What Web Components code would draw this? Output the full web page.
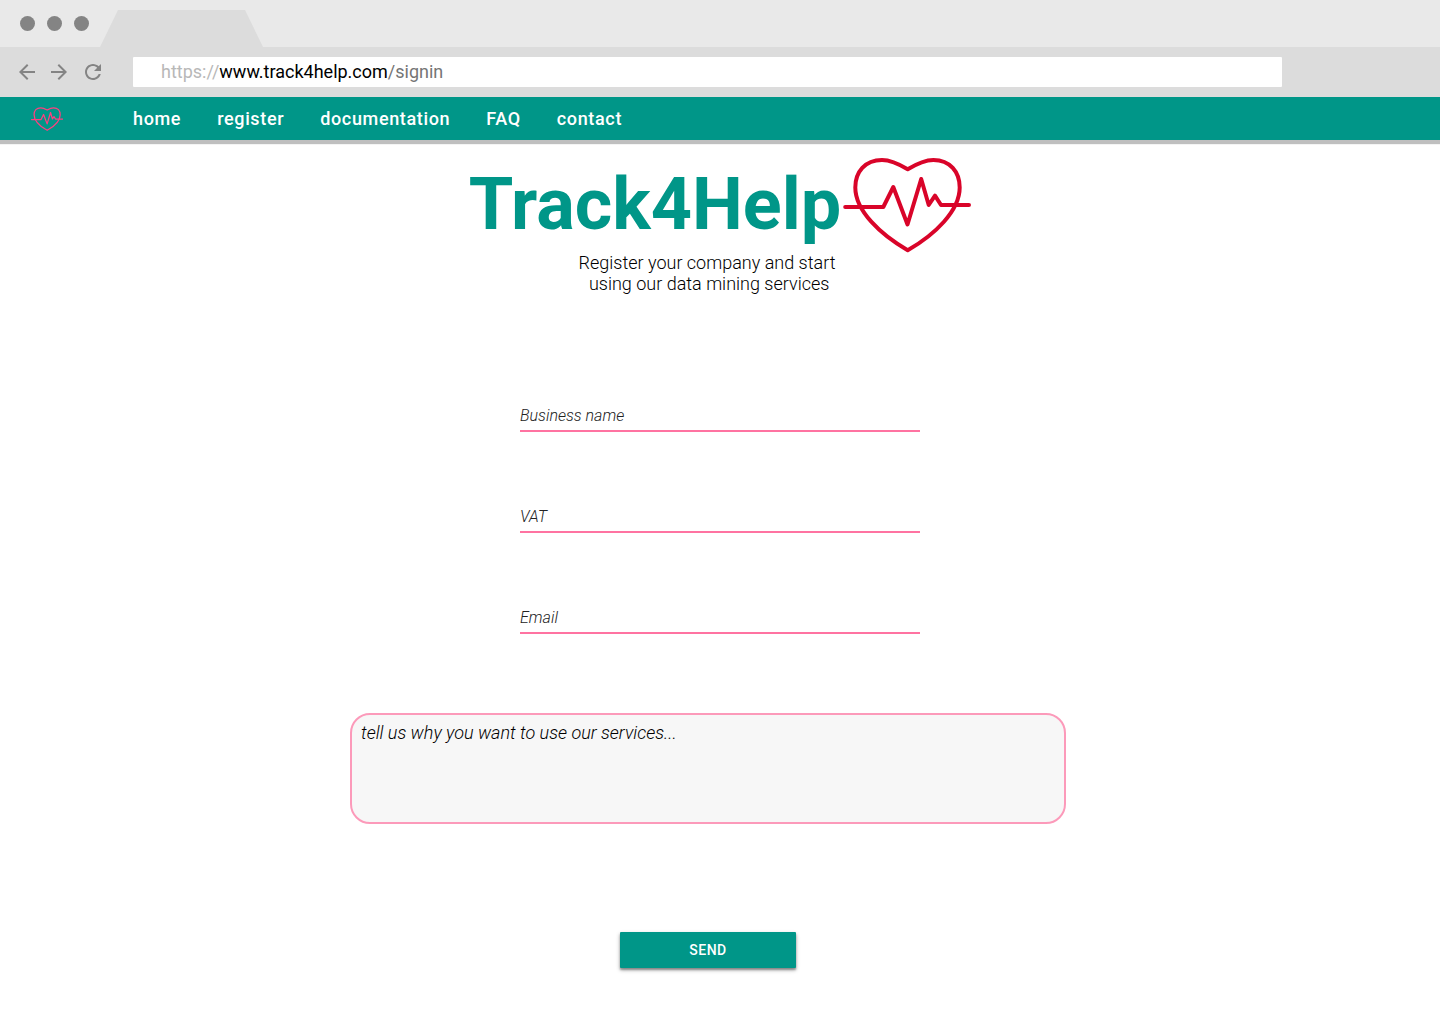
<!DOCTYPE html>
<html lang="en">
<head>
<meta charset="utf-8">
<meta name="viewport" content="width=device-width, initial-scale=1">
<title>Track4Help</title>
<style>
  body {
    margin: 0;
    background: #fff;
    color: #000;
    font-family: Roboto, "Liberation Sans", sans-serif;
    --teal: #009688;
    --pink: #ff73a1;
    --chrome: #dcdcdc;
    --chrome-icon: #848484;
    --label-tracking: .036em;
  }
</style>
</head>
<body>
<t4h-page></t4h-page>

<script>
class T4hElement extends HTMLElement {
  constructor() {
    super();
    this.attachShadow({ mode: "open" });
  }
  connectedCallback() {
    if (!this.shadowRoot.firstChild) this.shadowRoot.innerHTML = this.render();
  }
}

// Heart with a pulse line; takes its colour from the text colour.
customElements.define("t4h-heart", class extends T4hElement {
  render() {
    return `
      <style>
        :host { display: block; width: 128px; flex: none; }
        svg { display: block; width: 100%; height: auto; stroke-width: var(--heart-stroke, 4); }
      </style>
      <svg viewBox="0 0 128 96" fill="none" stroke="currentColor"
           stroke-linecap="round" stroke-linejoin="round" aria-hidden="true">
        <path d="M64.7 12.3C56 7 48 3 39 3C22 3 12.300 15 12.300 30.500C12.300 54 38 78 64.700 93.200C91.400 78 116.700 54 116.700 30.500C116.700 15 107 3 90.400 3C81.400 3 73.400 7 64.700 12.300Z"/>
        <path d="M2.200 50H40.300L50.300 30L64.500 67.500L78.200 22L85.700 48L92 38.700L98 48H126"/>
      </svg>`;
  }
});

customElements.define("t4h-browser-bar", class extends T4hElement {
  render() {
    return `
      <style>
        :host { display: block; }
        .strip {
          display: flex; align-items: flex-end; height: 47px;
          background: #e9e9e9;
        }
        .dots { display: flex; gap: 12px; padding: 0 11px 16px 20px; }
        .dots i { width: 15px; height: 15px; border-radius: 50%; background: var(--chrome-icon); }
        .tab {
          width: 163px; height: 37px; background: var(--chrome);
          clip-path: polygon(18px 0, 145px 0, 100% 100%, 0 100%);
        }
        .tools {
          display: flex; align-items: center; height: 50px;
          padding-left: 15px; background: var(--chrome);
        }
        button {
          width: 24px; height: 24px; margin: 0 8px 0 0; padding: 0;
          border: 0; background: none; color: var(--chrome-icon);
        }
        button:nth-of-type(2) { margin-right: 10px; }
        button:nth-of-type(3) { margin-right: 28px; }
        svg { display: block; width: 24px; height: 24px; fill: currentColor; }
        .url {
          flex: 1; margin-right: 158px; padding-left: 28px;
          border-radius: 1px; background: #fff;
          font-size: 18px; line-height: 30px; color: #757575;
        }
        .scheme { color: #b8b8b8; }
        .host { color: #000; }
      </style>
      <div class="strip">
        <div class="dots"><i></i><i></i><i></i></div>
        <div class="tab"></div>
      </div>
      <div class="tools">
        <button type="button" aria-label="Back"><svg viewBox="0 0 24 24"><path d="M20 11H7.830l5.590-5.590L12 4l-8 8 8 8 1.410-1.410L7.830 13H20v-2z"/></svg></button>
        <button type="button" aria-label="Forward"><svg viewBox="0 0 24 24"><path d="M12 4l-1.410 1.410L16.170 11H4v2h12.170l-5.580 5.590L12 20l8-8z"/></svg></button>
        <button type="button" aria-label="Reload"><svg viewBox="0 0 24 24"><path d="M17.650 6.350C16.200 4.900 14.210 4 12 4c-4.420 0-7.990 3.580-7.990 8s3.570 8 7.990 8c3.730 0 6.840-2.550 7.730-6h-2.080c-.820 2.330-3.040 4-5.650 4-3.310 0-6-2.690-6-6s2.690-6 6-6c1.660 0 3.140.690 4.220 1.780L13 11h7V4l-2.350 2.350z"/></svg></button>
        <div class="url"><span class="scheme">https://</span><span class="host">www.track4help.com</span>/signin</div>
      </div>`;
  }
});

customElements.define("t4h-nav", class extends T4hElement {
  render() {
    return `
      <style>
        :host {
          display: flex; align-items: center; gap: 70px;
          height: 43px; padding-left: 31px;
          background: var(--teal);
          box-shadow: 0 4px 1px rgba(0, 0, 0, .25);
        }
        t4h-heart { width: 32px; color: #ff3f80; --heart-stroke: 5; }
        nav { display: flex; gap: 36px; }
        ::slotted(a) {
          color: #fff; text-decoration: none;
          font-size: 18px; font-weight: 500; line-height: 22px;
          letter-spacing: var(--label-tracking);
        }
      </style>
      <t4h-heart></t4h-heart>
      <nav><slot></slot></nav>`;
  }
});

customElements.define("t4h-hero", class extends T4hElement {
  render() {
    return `
      <style>
        :host { display: flex; flex-direction: column; align-items: center; }
        .brand { display: flex; align-items: flex-start; gap: 2px; }
        h1 {
          margin: 6px 0 0; color: var(--teal);
          font-size: 72px; font-weight: 700; line-height: 84px;
        }
        t4h-heart { color: #d90429; }
        p {
          margin: -1px 26px 0 0; text-align: center;
          font-size: 18px; font-weight: 300; line-height: 21px;
        }
      </style>
      <div class="brand"><h1>Track4Help</h1><t4h-heart></t4h-heart></div>
      <p><slot></slot></p>`;
  }
});

customElements.define("t4h-field", class extends T4hElement {
  render() {
    const label = this.getAttribute("label");
    const type = this.getAttribute("type") || "text";
    return `
      <style>
        :host { display: block; width: 400px; max-width: 100%; }
        input {
          display: block; box-sizing: border-box; width: 100%; height: 32px;
          margin: 0; padding: 0; border: 0; outline: 0; border-radius: 0;
          border-bottom: 2px solid var(--pink); background: none;
          font: italic 300 16px/20px Roboto, "Liberation Sans", sans-serif; color: #000;
        }
        input::placeholder { color: #222; opacity: 1; }
      </style>
      <input type="${type}" aria-label="${label}" placeholder="${label}">`;
  }
});

customElements.define("t4h-textarea", class extends T4hElement {
  render() {
    const label = this.getAttribute("label");
    return `
      <style>
        :host { display: block; width: 716px; max-width: 100%; }
        textarea {
          display: block; box-sizing: border-box; width: 100%; height: 111px;
          margin: 0; padding: 7px 9px; resize: none; outline: 0;
          border: 2px solid #fc9aba; border-radius: 20px; background: #f7f7f7;
          font: italic 300 18px/21px Roboto, "Liberation Sans", sans-serif; color: #000;
        }
        textarea::placeholder { color: #000; opacity: 1; }
      </style>
      <textarea aria-label="${label}" placeholder="${label}"></textarea>`;
  }
});

customElements.define("t4h-register-form", class extends T4hElement {
  render() {
    return `
      <style>
        :host { display: block; }
        form { display: flex; flex-direction: column; align-items: center; }
        .fields { display: flex; flex-direction: column; gap: 69px; max-width: 100%; }
        t4h-textarea { margin: 79px 24px 0 0; }
        button {
          width: 176px; height: 36px; margin: 108px 24px 0 0; padding: 0;
          border: 0; border-radius: 1px; background: var(--teal); color: #fff;
          font: 500 14px/16px Roboto, "Liberation Sans", sans-serif;
          letter-spacing: var(--label-tracking);
          box-shadow: 0 2px 2px rgba(0, 0, 0, .3), 0 2px 4px rgba(0, 0, 0, .3);
        }
      </style>
      <form>
        <div class="fields">
          <t4h-field label="Business name"></t4h-field>
          <t4h-field label="VAT"></t4h-field>
          <t4h-field label="Email" type="email"></t4h-field>
        </div>
        <t4h-textarea label="tell us why you want to use our services..."></t4h-textarea>
        <button type="button">SEND</button>
      </form>`;
  }
});

customElements.define("t4h-page", class extends T4hElement {
  render() {
    return `
      <style>
        :host { display: block; }
        main { padding: 17px 0 56px; }
        t4h-register-form { margin-top: 106px; }
      </style>
      <t4h-browser-bar></t4h-browser-bar>
      <t4h-nav>
        <a href="#home">home</a>
        <a href="#register">register</a>
        <a href="#documentation">documentation</a>
        <a href="#faq">FAQ</a>
        <a href="#contact">contact</a>
      </t4h-nav>
      <main>
        <t4h-hero>Register your company and start<br>&nbsp;using our data mining services</t4h-hero>
        <t4h-register-form></t4h-register-form>
      </main>`;
  }
});
</script>
</body>
</html>
